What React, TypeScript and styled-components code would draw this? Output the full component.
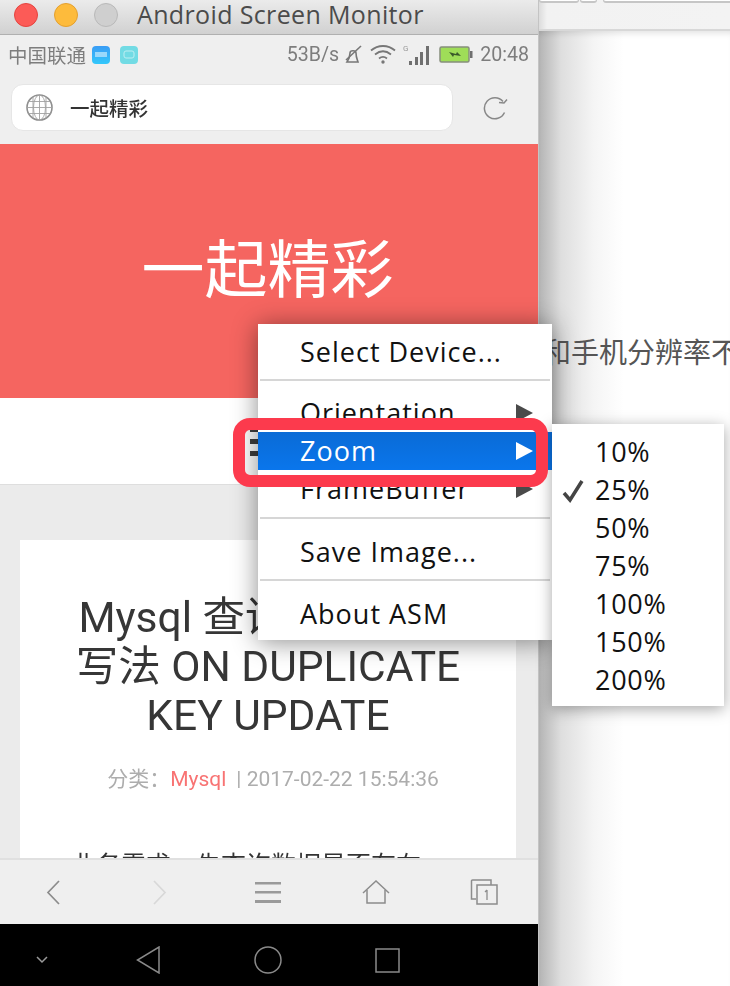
import React from "react";
import styled, { createGlobalStyle } from "styled-components";

const GlobalStyle = createGlobalStyle`
  html, body {
    margin: 0;
    padding: 0;
    background: #fff;
  }
`;

const CJK = `"Noto Sans CJK SC", sans-serif`;
const LATIN = `Roboto, "Noto Sans CJK SC", sans-serif`;
const MENU_FONT = `"Open Sans", "DejaVu Sans", sans-serif`;

const Desktop = styled.div`
  position: relative;
  width: 730px;
  height: 986px;
  display: flex;
  overflow: hidden;
`;

const PhoneWindow = styled.div`
  width: 538px;
  flex: none;
  display: flex;
  flex-direction: column;
  border-right: 1px solid #c4c4c4;
`;

const TitleBar = styled.div`
  height: 35px;
  flex: none;
  display: flex;
  align-items: center;
  padding-left: 14px;
  box-sizing: border-box;
  background: linear-gradient(#ebebeb, #d1d1d1);
  border-bottom: 1px solid #b0b0b0;
`;

const Light = styled.span<{ $color: string; $edge: string }>`
  width: 24px;
  height: 24px;
  margin-right: 16px;
  margin-top: -4px;
  box-sizing: border-box;
  border-radius: 50%;
  background: ${(p) => p.$color};
  border: 1px solid ${(p) => p.$edge};
`;

const WindowTitle = styled.div`
  margin-left: 3px;
  margin-top: -6px;
  font: 25px/30px ${MENU_FONT};
  letter-spacing: 0.36px;
  color: #4b4b4b;
  white-space: nowrap;
`;

const Screen = styled.div`
  flex: 1;
  min-height: 0;
  display: flex;
  flex-direction: column;
  filter: blur(0.35px);
`;

const StatusBar = styled.div`
  height: 40px;
  flex: none;
  box-sizing: border-box;
  padding: 0 9px 1px 8px;
  display: flex;
  align-items: center;
  justify-content: space-between;
  background: #efefef;
  font: 19.6px ${LATIN};
  color: #7d7d7d;
`;

const StatusGroup = styled.div`
  display: flex;
  align-items: center;
`;

const Carrier = styled.span`
  font-family: ${CJK};
  font-size: 19.5px;
  margin-right: 6px;
  white-space: nowrap;
`;

const AppBadge = styled.span<{ $color: string }>`
  width: 18px;
  height: 18px;
  border-radius: 4px;
  margin-right: 10px;
  background: ${(p) => p.$color};
  display: flex;
  align-items: center;
  justify-content: center;
`;

const Gap = styled.span<{ $width: number }>`
  width: ${(p) => p.$width}px;
  flex: none;
`;

const AddressRow = styled.div`
  height: 69px;
  flex: none;
  box-sizing: border-box;
  padding: 9px 0 13px 11px;
  display: flex;
  align-items: stretch;
  background: #efefef;
`;

const AddressField = styled.div`
  width: 442px;
  box-sizing: border-box;
  background: #fff;
  border: 1px solid #e6e6e6;
  border-radius: 12px;
  display: flex;
  align-items: center;
  padding-left: 14px;
`;

const AddressText = styled.span`
  margin-left: 17px;
  font: 500 19.5px ${CJK};
  color: #333;
`;

const ReloadButton = styled.div`
  margin-left: 30px;
  display: flex;
  align-items: center;
`;

const Banner = styled.div`
  height: 254px;
  flex: none;
  box-sizing: border-box;
  padding-bottom: 13px;
  padding-right: 3px;
  background: #f56560;
  display: flex;
  align-items: center;
  justify-content: center;
  font: 63px ${CJK};
  color: #fff;
`;

const TabStrip = styled.div`
  height: 87px;
  flex: none;
  box-sizing: border-box;
  padding: 1px 0 0 250px;
  background: #fff;
  border-bottom: 1px solid #dedede;
  display: flex;
  align-items: center;
`;

const TabGlyph = styled.div`
  width: 8px;
  height: 29px;
  background: repeating-linear-gradient(#3f3f3f 0 5px, transparent 5px 12px);
`;

const Article = styled.div`
  flex: 1;
  min-height: 0;
  overflow: hidden;
  box-sizing: border-box;
  padding: 55px 22px 0 20px;
  background: #ebebeb;
`;

const Card = styled.div`
  height: 400px;
  background: #fff;
  box-sizing: border-box;
  padding: 53px 0 0;
  text-align: center;
`;

const Heading = styled.h1`
  margin: 0;
  font: 400 42.5px/49px ${LATIN};
  color: #363636;
  white-space: nowrap;
`;

const Meta = styled.div`
  margin-top: 22px;
  padding-left: 10px;
  font: 21px/30px ${LATIN};
  color: #adadad;
  white-space: nowrap;
`;

const MetaLabel = styled.span`
  font-family: ${CJK};
`;

const MetaLink = styled.span`
  color: #f87373;
  margin-right: 10px;
`;

const Lead = styled.p`
  margin: 52px 0 0;
  padding-left: 51px;
  text-align: left;
  font: 25px/34px ${CJK};
  color: #333;
  white-space: nowrap;
`;

const Toolbar = styled.div`
  height: 66px;
  flex: none;
  box-sizing: border-box;
  background: #efefef;
  border-top: 2px solid #e0e0e0;
  display: grid;
  grid-template-columns: 106px repeat(4, 108px);
  align-items: center;
  justify-items: center;
`;

const ToolSlot = styled.div`
  display: flex;
`;

const NavBar = styled.div`
  height: 62px;
  flex: none;
  box-sizing: border-box;
  background: #000;
  display: flex;
  align-items: center;
  padding: 10px 0 0 35px;
`;

const SidePane = styled.div`
  flex: 1;
  min-width: 0;
  display: flex;
  flex-direction: column;
`;

const SideToolbar = styled.div`
  height: 31px;
  flex: none;
  box-sizing: border-box;
  background: linear-gradient(to right, #dcdcdc 0, #f2f2f2 8px, #f3f3f3 100%);
  border-bottom: 2px solid #d8d8d8;
  display: flex;
  align-items: flex-start;
`;

const SideTool = styled.span<{ $width: number; $gap: number }>`
  width: ${(p) => p.$width}px;
  height: 3px;
  flex: none;
  box-sizing: border-box;
  margin-right: ${(p) => p.$gap}px;
  border: 1px solid #c6c6c6;
  border-top: none;
  border-bottom-width: 2px;
  border-radius: 0 0 3px 3px;
  background: #fff;
`;

const SideBody = styled.div`
  flex: 1;
  padding: 302px 0 0 4px;
  background: linear-gradient(to right, #b4b4b4 0, #dedede 22px, #f5f5f5 55px, #fff 85px);
  box-shadow: inset 0 6px 6px -4px rgba(0, 0, 0, 0.12);
  font: 28px/36px ${CJK};
  color: #555;
  white-space: nowrap;
  overflow: hidden;
`;

const Menu = styled.div`
  position: absolute;
  left: 258px;
  top: 324px;
  width: 294px;
  height: 316px;
  box-sizing: border-box;
  padding: 9px 0 0;
  background: #fff;
  box-shadow: 0 2px 24px rgba(0, 0, 0, 0.45);
  font: 27px/38px ${MENU_FONT};
  letter-spacing: 1px;
  color: #111;
`;

const MenuRow = styled.div<{ $active?: boolean }>`
  height: 38px;
  box-sizing: border-box;
  padding: 0 19px 0 42px;
  display: flex;
  align-items: center;
  justify-content: space-between;
  white-space: nowrap;
  color: ${(p) => (p.$active ? "#fff" : "#111")};
  background: ${(p) => (p.$active ? "linear-gradient(#0a6bd6, #0a76ec)" : "transparent")};
`;

const MenuRule = styled.div<{ $above: number; $below: number }>`
  height: 2px;
  margin: ${(p) => p.$above}px 2px ${(p) => p.$below}px 2px;
  background: #d6d6d6;
`;

const Arrow = styled.span<{ $active?: boolean }>`
  width: 0;
  height: 0;
  border-left: 17px solid ${(p) => (p.$active ? "#fff" : "#4a4a4a")};
  border-top: 9px solid transparent;
  border-bottom: 9px solid transparent;
`;

const SubMenu = styled.div`
  position: absolute;
  left: 552px;
  top: 424px;
  width: 172px;
  height: 282px;
  box-sizing: border-box;
  padding-top: 9px;
  background: #fff;
  box-shadow: 0 3px 14px rgba(0, 0, 0, 0.35);
  font: 27px/38px ${MENU_FONT};
  letter-spacing: 0.7px;
  color: #111;
`;

const SubRow = styled.div`
  position: relative;
  height: 38px;
  padding-left: 43px;
`;

const Check = styled.svg`
  position: absolute;
  left: 10px;
  top: 8px;
`;

const Callout = styled.div`
  position: absolute;
  left: 233px;
  top: 418px;
  width: 315px;
  height: 69px;
  box-sizing: border-box;
  border: 12px solid #fc3a4d;
  border-radius: 17px;
`;

const Globe = () => (
  <svg width="27" height="27" viewBox="0 0 27 27" fill="none" stroke="#a2a2a2" strokeWidth="0.9">
    <circle cx="13.5" cy="13.5" r="12.5" strokeWidth="1.6" stroke="#8f8f8f" />
    <ellipse cx="13.5" cy="13.5" rx="6" ry="12.5" />
    <path d="M13.5 1v25M1 13.500h25M2.500 7.500h22M2.500 19.500h22M7 2.500v22M20 2.500v22" />
  </svg>
);

const Reload = () => (
  <svg width="25" height="25" viewBox="0 0 25 25" fill="none" stroke="#888" strokeWidth="1.5">
    <path d="M21.500 17.500a10.500 10.500 0 1 1-1.500-11" />
    <path d="M24 4.500 21 8l-5-.5" />
  </svg>
);

const MuteIcon = () => (
  <svg width="17" height="19" viewBox="0 0 17 19" fill="none" stroke="#777" strokeWidth="1.6">
    <path d="M2 17c2-3 3-5 3-9 0-3 6-3 6 0 0 4 1 6 2 9z" />
    <path d="M1 15 16 1" />
  </svg>
);

const WifiIcon = () => (
  <svg width="26" height="19" viewBox="0 0 26 19" fill="none" stroke="#777" strokeWidth="1.800">
    <path d="M1 5.500c7-6 17-6 24 0" />
    <path d="M5 9.500c5-4 11-4 16 0" />
    <path d="M9 13.500c2.500-2 5.500-2 8 0" />
    <circle cx="13" cy="17" r="1.700" fill="#777" stroke="none" />
  </svg>
);

const SignalIcon = () => (
  <svg width="27" height="22" viewBox="0 0 27 22" fill="#6f6f6f">
    <rect x="6" y="17" width="3" height="4" />
    <rect x="12" y="13" width="3" height="8" />
    <rect x="17" y="8" width="3" height="13" />
    <rect x="23" y="2" width="3" height="19" />
    <text x="0" y="7" fontSize="8" fontFamily="Roboto, sans-serif" fill="#999">
      G
    </text>
  </svg>
);

const BatteryIcon = () => (
  <svg width="34" height="18" viewBox="0 0 34 18">
    <rect x="1" y="1" width="29" height="15" rx="1.500" fill="#9fdd58" stroke="#868e7c" strokeWidth="1.500" />
    <rect x="31" y="5" width="2.500" height="7" fill="#6f6f6f" />
    <path d="M10 6l7 2 1-2 4 4-7-1-1 2z" fill="#3b5a2a" />
  </svg>
);

const Back = () => (
  <svg width="14" height="25" viewBox="0 0 14 25" fill="none" stroke="#8c8c8c" strokeWidth="1.700">
    <path d="M13 1 2 12.500 13 24" />
  </svg>
);

const Forward = () => (
  <svg width="14" height="25" viewBox="0 0 14 25" fill="none" stroke="#d8d8d8" strokeWidth="1.700">
    <path d="M1 1l11 11.500L1 24" />
  </svg>
);

const MenuLines = () => (
  <svg width="26" height="21" viewBox="0 0 26 21" fill="#9a9a9a">
    <rect y="0" width="26" height="2.500" />
    <rect y="9" width="26" height="2.500" />
    <rect y="18" width="26" height="3" />
  </svg>
);

const Home = () => (
  <svg width="28" height="24" viewBox="0 0 28 24" fill="none" stroke="#8c8c8c" strokeWidth="1.500">
    <path d="M1 13 14 1l13 12" />
    <path d="M5 10v13h18V10" />
  </svg>
);

const Tabs = () => (
  <svg width="28" height="26" viewBox="0 0 28 26" fill="none" stroke="#8c8c8c" strokeWidth="1.500">
    <path d="M6 20H1.500V2a1 1 0 0 1 1-1H21v5" />
    <rect x="7" y="6" width="20" height="19" fill="#efefef" />
    <path d="M17 11v10M15 13l2-2" strokeWidth="1.300" />
  </svg>
);

const SoftBack = () => (
  <svg width="24" height="28" viewBox="0 0 24 28" fill="none" stroke="#8a8a8a" strokeWidth="1.500">
    <path d="M23 1v26L1.500 14z" />
  </svg>
);

const SoftCircle = () => (
  <svg width="28" height="28" viewBox="0 0 28 28" fill="none" stroke="#8a8a8a" strokeWidth="1.500">
    <circle cx="14" cy="14" r="13" />
  </svg>
);

const SoftSquare = () => (
  <svg width="25" height="25" viewBox="0 0 25 25" fill="none" stroke="#8a8a8a" strokeWidth="1.500">
    <rect x="1" y="1" width="23" height="23" />
  </svg>
);

const SoftChevron = () => (
  <svg width="14" height="8" viewBox="0 0 14 8" fill="none" stroke="#9a9a9a" strokeWidth="1.500">
    <path d="M2 1l5 5 5-5" />
  </svg>
);

const zoomLevels = ["10%", "25%", "50%", "75%", "100%", "150%", "200%"];

const App: React.FC = () => {
  return (
    <Desktop>
      <GlobalStyle />
      <PhoneWindow>
        <TitleBar>
          <Light $color="#fc5b57" $edge="#e5443f" />
          <Light $color="#fdbb3c" $edge="#e4a02f" />
          <Light $color="#cfcfcf" $edge="#b9b9b9" />
          <WindowTitle>Android Screen Monitor</WindowTitle>
        </TitleBar>
        <Screen>
          <StatusBar>
            <StatusGroup>
              <Carrier>中国联通</Carrier>
              <AppBadge $color="linear-gradient(#3a9cf5, #33c8fb)">
                <svg width="12" height="5" viewBox="0 0 12 5">
                  <rect width="12" height="5" fill="#9ad8fb" />
                </svg>
              </AppBadge>
              <AppBadge $color="#72dbe4">
                <svg width="12" height="9" viewBox="0 0 12 9" fill="none" stroke="#bdeef2">
                  <rect x="1" y="1" width="10" height="7" rx="2" />
                </svg>
              </AppBadge>
            </StatusGroup>
            <StatusGroup>
              <span>53B/s</span>
              <Gap $width={6} />
              <MuteIcon />
              <Gap $width={8} />
              <WifiIcon />
              <Gap $width={7} />
              <SignalIcon />
              <Gap $width={9} />
              <BatteryIcon />
              <Gap $width={7} />
              <span>20:48</span>
            </StatusGroup>
          </StatusBar>
          <AddressRow>
            <AddressField>
              <Globe />
              <AddressText>一起精彩</AddressText>
            </AddressField>
            <ReloadButton>
              <Reload />
            </ReloadButton>
          </AddressRow>
          <Banner>一起精彩</Banner>
          <TabStrip>
            <TabGlyph />
          </TabStrip>
          <Article>
            <Card>
              <Heading>
                Mysql 查询更新特殊
                <br />
                写法 ON DUPLICATE
                <br />
                KEY UPDATE
              </Heading>
              <Meta>
                <MetaLabel>分类：</MetaLabel>
                <MetaLink>Mysql</MetaLink>| 2017-02-22 15:54:36
              </Meta>
              <Lead>业务需求：先查询数据是否存在</Lead>
            </Card>
          </Article>
          <Toolbar>
            <ToolSlot>
              <Back />
            </ToolSlot>
            <ToolSlot>
              <Forward />
            </ToolSlot>
            <ToolSlot>
              <MenuLines />
            </ToolSlot>
            <ToolSlot>
              <Home />
            </ToolSlot>
            <ToolSlot>
              <Tabs />
            </ToolSlot>
          </Toolbar>
          <NavBar>
            <SoftChevron />
            <Gap $width={87} />
            <SoftBack />
            <Gap $width={94} />
            <SoftCircle />
            <Gap $width={93} />
            <SoftSquare />
          </NavBar>
        </Screen>
      </PhoneWindow>
      <SidePane>
        <SideToolbar>
          <SideTool $width={40} $gap={1} />
          <SideTool $width={17} $gap={6} />
          <SideTool $width={130} $gap={0} />
        </SideToolbar>
        <SideBody>和手机分辨率不一致</SideBody>
      </SidePane>

      <Menu>
        <MenuRow>Select Device...</MenuRow>
        <MenuRule $above={8} $below={13} />
        <MenuRow>
          Orientation
          <Arrow />
        </MenuRow>
        <MenuRow $active>
          Zoom
          <Arrow $active />
        </MenuRow>
        <MenuRow>
          FrameBuffer
          <Arrow />
        </MenuRow>
        <MenuRule $above={9} $below={14} />
        <MenuRow>Save Image...</MenuRow>
        <MenuRule $above={8} $below={14} />
        <MenuRow>About ASM</MenuRow>
      </Menu>

      <SubMenu>
        {zoomLevels.map((level) => (
          <SubRow key={level}>
            {level === "25%" && (
              <Check width="22" height="24" viewBox="0 0 22 24" fill="none" stroke="#444" strokeWidth="3.500">
                <path d="M2 14l6 7L20 2" />
              </Check>
            )}
            {level}
          </SubRow>
        ))}
      </SubMenu>

      <Callout />
    </Desktop>
  );
};

export default App;
